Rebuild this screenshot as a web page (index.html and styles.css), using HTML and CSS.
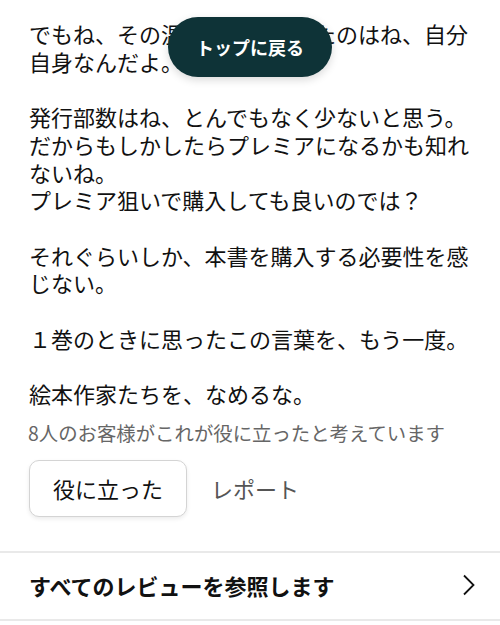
FILE: index.html
```html
<!DOCTYPE html>
<html lang="ja">

<head>
    <meta charset="UTF-8">
    <meta name="viewport" content="width=device-width, initial-scale=1.0">
    <title>レビュー</title>
    <link rel="stylesheet" href="styles.css">
</head>

<body>
    <button class="back-to-top">トップに戻る</button>

    <div class="review">
        <p class="review-body">でもね、その温床を作っていたのはね、自分自身なんだよ。<br><br>発行部数はね、とんでもなく少ないと思う。<br>だからもしかしたらプレミアになるかも知れないね。<br>プレミア狙いで購入しても良いのでは？<br><br>それぐらいしか、本書を購入する必要性を感じない。<br><br>１巻のときに思ったこの言葉を、もう一度。<br><br>絵本作家たちを、なめるな。</p>
        <p class="helpful-count">8人のお客様がこれが役に立ったと考えています</p>
        <div class="actions">
            <button class="helpful-btn">役に立った</button>
            <span class="report">レポート</span>
        </div>
    </div>

    <a class="see-all" href="#">
        <span>すべてのレビューを参照します</span>
        <svg class="chevron" width="14" height="22" viewBox="0 0 14 22">
            <path d="M2 1.5 L11.5 11 L2 20.5" fill="none" stroke="#111" stroke-width="1.8" />
        </svg>
    </a>
</body>

</html>
```

FILE: styles.css
```css
* {
    margin: 0;
    padding: 0;
    box-sizing: border-box;
}

body {
    font-family: "Noto Sans CJK JP", "Noto Sans", sans-serif;
    background: white;
    color: #111;
    width: 500px;
    overflow: hidden;
}

.back-to-top {
    position: absolute;
    top: 17px;
    left: 168px;
    width: 164px;
    height: 60px;
    border: none;
    border-radius: 30px;
    background: #0e3337;
    color: white;
    font-family: inherit;
    font-size: 18px;
    font-weight: 700;
    box-shadow: 0 3px 8px rgba(0, 0, 0, 0.15);
}

.review {
    padding: 20px 29px 0;
}

.review-body {
    font-size: 22px;
    line-height: 27.7px;
    width: 442px;
}

.helpful-count {
    margin-top: 13px;
    font-size: 19.4px;
    line-height: 24px;
    color: #666;
    margin-left: -1px;
    white-space: nowrap;
}

.actions {
    display: flex;
    align-items: center;
    gap: 24px;
    margin-top: 15px;
}

.helpful-btn {
    width: 158px;
    height: 57px;
    background: white;
    border: 1px solid #d4d4d4;
    border-radius: 10px;
    font-family: inherit;
    font-size: 22px;
    color: #111;
    box-shadow: 0 2px 4px rgba(0, 0, 0, 0.08);
}

.report {
    font-size: 22px;
    color: #555;
}

.see-all {
    display: flex;
    align-items: center;
    justify-content: space-between;
    margin-top: 34px;
    height: 70px;
    padding: 0 24px 2px 29px;
    border-top: 2px solid #e9e9e9;
    border-bottom: 2px solid #e9e9e9;
    color: #111;
    text-decoration: none;
    font-size: 22px;
    font-weight: 700;
}

.chevron {
    display: block;
}
```
